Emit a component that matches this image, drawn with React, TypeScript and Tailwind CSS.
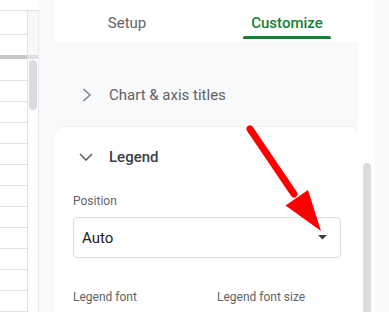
import React from 'react';

const font = { fontFamily: 'Roboto, "Noto Sans", sans-serif' };

function SheetGrid() {
  const rows = Array.from({ length: 11 });
  return (
    <div className="flex w-[39px] flex-none flex-col bg-white">
      <div className="h-[18px]" />
      <div className="flex flex-1 border-t border-[#e1e1e1]">
        {/* cells */}
        <div className="flex w-[28px] flex-col border-r border-[#e1e1e1]">
          <div className="h-[24px] flex-none border-b border-[#e1e1e1]" />
          <div className="h-[20px] flex-none" />
          <div className="h-[4px] flex-none bg-[#c8c8c8]" />
          <div className="h-[22px] flex-none border-b border-[#e1e1e1]" />
          {rows.map((_, i) => (
            <div key={i} className="h-[21px] flex-none border-b border-[#e1e1e1]" />
          ))}
        </div>
        {/* scrollbar */}
        <div className="flex w-[10px] flex-col">
          <div className="h-[44px] bg-[#f8f8f8]" />
          <div className="h-[4px] bg-[#dedede]" />
          <div className="ml-[1px] mt-[1px] h-[50px] w-[8px] rounded-full bg-[#dadce0]" />
        </div>
        <div className="w-px bg-[#e8eaed]" />
      </div>
    </div>
  );
}

function Tabs() {
  return (
    <div className="flex h-[42px] flex-none gap-[72px] pl-[28px]">
      <div className="flex w-[88px] flex-col items-center pt-[13px]">
        <span className="text-[15px] leading-[20px] text-[#5f6368]">Setup</span>
      </div>
      <div className="flex w-[88px] flex-col items-center pt-[13px]">
        <span className="text-[15px] font-medium leading-[20px] text-[#188038]">Customize</span>
        <div className="mt-[3px] h-[3px] w-full rounded-t-[2px] bg-[#188038]" />
      </div>
    </div>
  );
}

function ChartSection() {
  return (
    <div className="h-[85px] flex-none pl-[27px] pt-[43px]">
      <div className="flex h-[20px] items-center">
        <svg width="10" height="14" viewBox="0 0 10 14" fill="none">
          <path d="M1.5 1 L8 7 L1.5 13" stroke="#80868b" strokeWidth="1.6" />
        </svg>
        <span className="ml-[17px] text-[15px] leading-[20px] text-[#5f6368]">Chart &amp; axis titles</span>
      </div>
    </div>
  );
}

function LegendCard() {
  return (
    <div className="flex-1 rounded-t-[8px] bg-white pl-[18px] shadow-[0_-1px_1px_rgba(0,0,0,0.04)]">
      <div className="mt-[20px] flex h-[20px] items-center pl-[6px]">
        <svg width="14" height="8" viewBox="0 0 14 8" fill="none">
          <path d="M1 1 L7 7 L13 1" stroke="#5f6368" strokeWidth="1.6" />
        </svg>
        <span className="ml-[16px] text-[15px] font-medium leading-[20px] text-[#3c4043]">Legend</span>
      </div>

      <div className="mt-[26px] text-[12px] leading-[16px] text-[#5f6368]">Position</div>

      <div className="mt-[8px] flex h-[41px] w-[268px] items-center justify-between rounded-[4px] border border-[#dadce0] pl-[8px] pr-[13px]">
        <span className="text-[15px] leading-[20px] text-[#202124]">Auto</span>
        <svg width="9" height="5" viewBox="0 0 9 5">
          <path d="M0 0 L9 0 L4.5 4.5 Z" fill="#3c4043" />
        </svg>
      </div>

      <div className="mt-[31px] flex text-[12px] leading-[16px] text-[#5f6368]">
        <div className="w-[144px]">Legend font</div>
        <div>Legend font size</div>
      </div>
    </div>
  );
}

export default function App() {
  return (
    <div className="relative flex h-[312px] w-[389px] overflow-hidden bg-white" style={font}>
      <SheetGrid />

      <div className="flex flex-1 bg-[#f8f9fa] pl-[16px]">
        <div className="flex w-[320px] flex-col bg-white">
          <Tabs />
          <div className="flex flex-1">
            <div className="flex w-[303px] flex-col bg-[#f8f9fa]">
              <ChartSection />
              <LegendCard />
            </div>
            <div className="w-[17px] pl-[5px] pt-[121px]">
              <div className="h-[160px] w-[8px] rounded-t-full bg-[#dadce0]" />
            </div>
          </div>
        </div>
      </div>

      {/* red annotation arrow */}
      <svg className="pointer-events-none absolute inset-0" width="389" height="312" viewBox="0 0 389 312">
        <line x1="250" y1="129" x2="294" y2="194" stroke="#ff0000" strokeWidth="7" strokeLinecap="round" />
        <polygon points="285.5,205.5 308,190 321,231" fill="#ff0000" />
      </svg>
    </div>
  );
}
